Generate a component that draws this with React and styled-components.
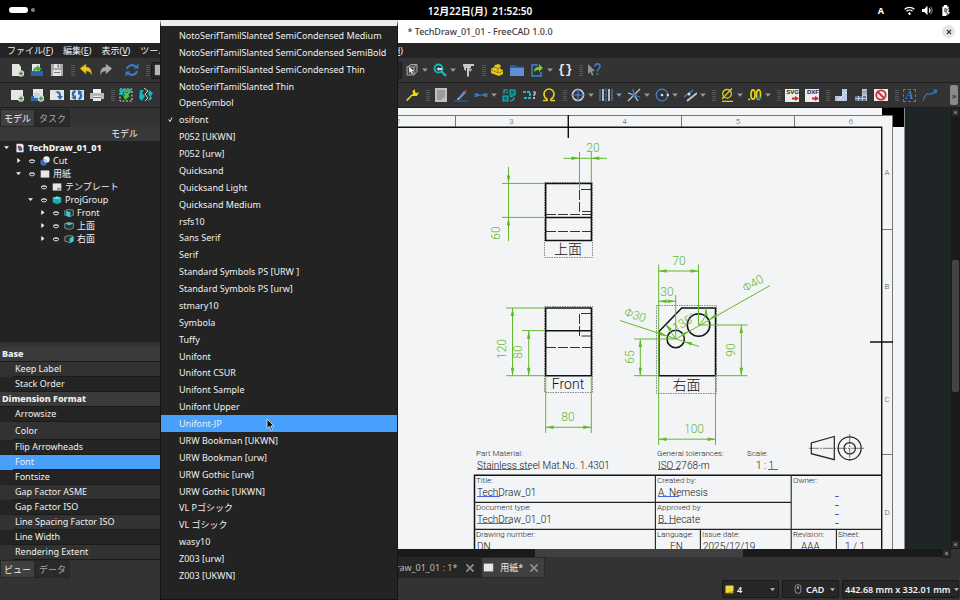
import React, { useState } from 'react';
import styled, { createGlobalStyle } from 'styled-components';

const fontNames = [
    'NotoSerifTamilSlanted SemiCondensed Medium',
    'NotoSerifTamilSlanted SemiCondensed SemiBold',
    'NotoSerifTamilSlanted SemiCondensed Thin',
    'NotoSerifTamilSlanted Thin',
    'OpenSymbol',
    'osifont',
    'P052 [UKWN]',
    'P052 [urw]',
    'Quicksand',
    'Quicksand Light',
    'Quicksand Medium',
    'rsfs10',
    'Sans Serif',
    'Serif',
    'Standard Symbols PS [URW ]',
    'Standard Symbols PS [urw]',
    'stmary10',
    'Symbola',
    'Tuffy',
    'Unifont',
    'Unifont CSUR',
    'Unifont Sample',
    'Unifont Upper',
    'Unifont-JP',
    'URW Bookman [UKWN]',
    'URW Bookman [urw]',
    'URW Gothic [urw]',
    'URW Gothic [UKWN]',
    'VL Pゴシック',
    'VL ゴシック',
    'wasy10',
    'Z003 [urw]',
    'Z003 [UKWN]',
];

const tree = [
    { depth: 0, arrow: 'open', icon: 'doc', label: 'TechDraw_01_01', bold: true },
    { depth: 1, arrow: 'closed', eye: true, icon: 'cut', label: 'Cut' },
    { depth: 1, arrow: 'open', eye: true, icon: 'sheet', label: '用紙' },
    { depth: 2, eye: true, icon: 'template', label: 'テンプレート' },
    { depth: 2, arrow: 'open', eye: true, icon: 'group', label: 'ProjGroup' },
    { depth: 3, arrow: 'closed', eye: true, icon: 'viewFront', label: 'Front' },
    { depth: 3, arrow: 'closed', eye: true, icon: 'viewTop', label: '上面' },
    { depth: 3, arrow: 'closed', eye: true, icon: 'viewRight', label: '右面' },
];

const properties = [
    { group: 'Base', rows: ['Keep Label', 'Stack Order'] },
    {
        group: 'Dimension Format',
        rows: ['Arrowsize', 'Color', 'Flip Arrowheads', 'Font', 'Fontsize', 'Gap Factor ASME',
            'Gap Factor ISO', 'Line Spacing Factor ISO', 'Line Width', 'Rendering Extent'],
        darkFirst: true,
    },
];

/* icons, all on a 14x14 grid */
const plus = <g><circle cx="11" cy="10.5" r="3.2" fill="#ddd" /><path d="M11 8.4v4.2M8.9 10.5h4.2" stroke="#3f9a3a" strokeWidth="1.4" /></g>;
const cube = <path d="M2 4l4-2.5h6v7L9 12H2z" fill="#444" stroke="#aaa" />;

const icons = {
    newDoc: <g><path d="M2 1h7l2 3v9H2z" fill="#e4e4e0" />{plus}</g>,
    open: <g><path d="M2 1h8v9H2z" fill="#e8e8e8" /><path d="M1 8h12v5H1z" fill="#2f62a8" /><path d="M3 9c0-4 2-5 4-5V2l5 4-5 3V7C5 7 4 8 3 9z" fill="#47b02f" /></g>,
    save: <g><path d="M1 1h12v12H1z" fill="#a9a9a6" /><path d="M4 1h6v4H4zM3 7h8v6H3z" fill="#e2e2e2" /><path d="M7.500 1.500h1.500v3H7.500zM4 9h6v1H4z" fill="#777" /></g>,
    undo: <path d="M1 5.500L7 1v3c4 0 6 3 5.500 8C11.500 9 10 8 7 8v3z" fill="#f0c518" stroke="#a98a10" strokeWidth=".5" />,
    redo: <path d="M13 5.500L7 1v3C3 4 1 7 1.500 12 2.500 9 4 8 7 8v3z" fill="#aaa" stroke="#777" strokeWidth=".5" />,
    refresh: <g fill="none" stroke="#3a7cc9" strokeWidth="2"><path d="M2 6a5 4.500 0 0 1 8.500-2.500M12 8a5 4.500 0 0 1-8.500 2.500" /><path d="M8.500 5.500h5v-5zM5.500 8.500h-5v5z" fill="#3a7cc9" stroke="none" /></g>,
    viewCube: <g>{cube}<path d="M2 4h7v8M9 4l3-2.500" fill="none" stroke="#aaa" /><path d="M4 4l5 4-2.200.3L8 10.500l-1.200.6-1.200-2.300L4.300 10z" fill="#f2f2f2" /></g>,
    zoomFit: <g fill="none"><circle cx="5.500" cy="5.500" r="4" stroke="#18b7bd" strokeWidth="1.800" /><path d="M8.500 8.500L13 13" stroke="#18b7bd" strokeWidth="2.400" /><path d="M3.500 6L6 4v1h3v2H6v1z" fill="#ddd" /></g>,
    caliper: <g><path d="M2 1h11v2h-3v2H8v8.500H6V5H5v3L3 6.500V4L2 3z" fill="#c9cac5" /><path d="M8 5l3 1-1 2.500L8 8z" fill="#a9aaa5" /></g>,
    part: <g><path d="M1 6l3-2 1-2 4-1 2 2-1 3 3 1v4l-4 2-8-3z" fill="#e9c91c" /><path d="M1 7l8 3 4-2M4 4l4 1.500 3-2M8 5.500V9" stroke="#7f6b05" strokeWidth=".8" fill="none" /></g>,
    folder: <g><path d="M0 2h5l1 1.500h8V13H0z" fill="#2d5ba0" /><path d="M0 5h14v8H0z" fill="#5f90d6" /></g>,
    exportLink: <g><path d="M8 2H2v11h9V9" fill="none" stroke="#3d88d4" strokeWidth="1.400" /><path d="M4 9c0-4 2-5 5-5V1l4 4-4 4V7C7 7 5 7.500 4 9z" fill="#7cc92b" /></g>,
    help: <g><path d="M1 1l7 7-3 .2L6.500 12l-1.500.7L3.500 9 1 11z" fill="#8f8f8f" /><path d="M8 3.500C8 0 13 0 13 3.500c0 2.500-2.500 2-2.500 5" fill="none" stroke="#3d7cc4" strokeWidth="1.600" /><circle cx="10.500" cy="11" r="1" fill="#3d7cc4" /></g>,
    page: <g><path d="M1 2h12v10H1z" fill="#e6e6e3" />{plus}</g>,
    pageTemplate: <g><path d="M3 1h10v8H3z" fill="#e6e6e3" /><path d="M1 8h11v5H1z" fill="#3568ad" /><path d="M4 5h6v5H4z" fill="#bcd0ea" />{plus}</g>,
    redraw: <g><path d="M0 2h14v10H0z" fill="#e6e6e3" /><path d="M5 4c4-2 6 0 6 4h2l-3 4-3-4h2c0-2-1-3-4-4z" fill="#2f69b5" /></g>,
    update: <g><path d="M0 2h14v10H0z" fill="#e6e6e3" /><path d="M5 2C1 3 1 7 3 9L1 10l5 2V7L4.500 8C4 6 4 5 6 4zM9 12c4-1 4-5 2-7l2-1-5-2v5l1.500-1c.5 2 .5 3-1.500 4z" fill="#2f69b5" /></g>,
    print: <g><path d="M3 1h8v4H3z" fill="#f1f1f1" /><path d="M0 5h14v6H0z" fill="#b9b9b7" /><path d="M3 8h8v5H3z" fill="#e9e9e9" /><path d="M3 9.500h8" stroke="#777" /></g>,
    activeView: <g><path d="M1 1h12v12H1z" fill="none" stroke="#ddd" strokeDasharray="2 1.500" /><path d="M1 1h11v3H4v3H1z" fill="#15b3b3" /><path d="M4 6c1-2 3-2 4-1l3-3 1 2-3 3 2 1-5 4-2-5 2 .5C6 6 5 6 4 6z" fill="#3fcf3a" /></g>,
    section: <g><path d="M1 2h4L3 5l3 3-3 5-3-3zM10 2l4 3-2 3 1 3-4 2 2-4-2-3z" fill="#14b5bb" /><path d="M5 0l4 3-3 3 3 4-3 3" stroke="#ccc" fill="none" /></g>,
    partial: <path d="M2 3l5-2 5 3-4 8-6-3z" fill="#14b5bb" />,
    wrench: <path d="M1 12l5-5 2-1-.5-3L10 1v3l1.500 1L14 4l-2 4H8.500L7 8l-4.500 5z" fill="#f0d50f" />,
    textPage: <g><path d="M1 0h12v14H1z" fill="#bfc3c5" /><path d="M3 3h8M3 5h8M3 7h8M3 9h8M3 11h5" stroke="#6b7072" strokeWidth=".9" /></g>,
    pencil: <g><path d="M0 13h14" stroke="#2c62ac" strokeWidth="1.200" /><path d="M4 10l6-7 2 1.700L6 11z" fill="#5b93dc" /><path d="M10 3l1.200-1.500 2 1.700L12 4.700z" fill="#e32727" /><path d="M3 12l1-2 2 1z" fill="#eee" /></g>,
    dimension: <g stroke="#3f7fce" fill="#3f7fce"><path d="M1 5v4M13 5v4M4 7h6" /><path d="M6 7L2 4.800v4.400zM8 7l4-2.200v4.400z" stroke="none" /></g>,
    balloon: <g fill="#0c6b6e" stroke="#19b9bd" strokeWidth="1.100"><path d="M1 8h5v5H1zM8 2h5v5H8z" /><path d="M2 6V2h4M12 9c0 3-1 4-4 4M8 9l3-1M4 4l2 1" fill="none" /></g>,
    detail: <g fill="none"><path d="M1 4h7v6H1" stroke="#19b9bd" strokeWidth="2" strokeDasharray="3 1" /><path d="M11 4h2v2l-1 1v1" stroke="#ddd" strokeWidth="1.200" /><path d="M12 9v2" stroke="#ddd" strokeWidth="1.600" /></g>,
    omega: <path d="M1 12.500h4V11C3 10 2 8 2 6a5 5 0 0 1 10 0c0 2-1 4-3 5v1.500h4" fill="none" stroke="#e8d21a" strokeWidth="1.600" />,
    center: <g fill="none"><circle cx="7" cy="7" r="5.500" stroke="#cfcfcf" strokeWidth="1.600" /><circle cx="7" cy="7" r="1.800" fill="#3f82d2" /><path d="M7 0v5M7 9v5M0 7h5M9 7h5" stroke="#3f82d2" strokeWidth="1.200" /></g>,
    lines: <g><path d="M1 1v12M13 1v12" stroke="#3f7fce" strokeWidth="1.200" /><path d="M4 1v12M10 1v12" stroke="#bbb" strokeWidth="2" /><path d="M7 0v14" stroke="#4a87d0" strokeDasharray="4 1" /></g>,
    cosmetic: <g fill="none" stroke="#c7c7c7" strokeWidth="1.300"><path d="M13 1L7 7 1 13M1 5l6 2 4 6" /><path d="M6 1l1 6 6 2" stroke="#3f82d2" /><circle cx="7" cy="7" r="2" fill="#3f82d2" stroke="none" /></g>,
    circle: <g fill="none"><circle cx="7" cy="7" r="5.800" stroke="#3f82d2" strokeWidth="1.300" /><circle cx="7" cy="7" r="1.300" fill="#ddd" /><circle cx="12.800" cy="7" r="1.200" fill="#ddd" /></g>,
    parallel: <g fill="none"><path d="M4 13L14 5" stroke="#c7c7c7" strokeWidth="1.800" /><path d="M1 9l9-7" stroke="#3f82d2" strokeWidth="1.400" /><circle cx="6" cy="6" r="1.500" fill="#ddd" /></g>,
    diameter: <g fill="none" stroke="#e3cd1c" strokeWidth="1.300"><circle cx="7" cy="5.800" r="4.300" /><path d="M2 11L12 .5M2 13.400h11" /></g>,
    decimals: <g fill="none" stroke="#e8d21a" strokeWidth="1.700"><ellipse cx="5" cy="6.500" rx="2" ry="4.700" /><ellipse cx="10.500" cy="6.500" rx="2" ry="4.700" /><path d="M0 11.500h2" /><path d="M11 7v6M8.500 10h5" stroke="#2f6bbb" strokeWidth="1.300" /></g>,
    hatch: <g><path d="M8 1h5v12H1V8h7z" fill="#a9bcd8" /><path d="M8 4l5 5M8 1l5 5M8 7l5 5M5 8l5 5M2 8l5 5M13 1L8 6M13 4L4 13M13 8l-5 5M8 8l-5 5" stroke="#e8edf5" strokeWidth=".6" /></g>,
    geoHatch: <g><path d="M8 1h5v12H1V8h7z" fill="#c3cad6" /><path d="M10 2v5M12 2v5M8 4h5" stroke="#7c8ca8" strokeWidth=".7" /><path d="M1 9h12M1 12h12" stroke="#2d5ba8" strokeWidth="1.500" strokeDasharray="3 1" /></g>,
    noFrame: <g fill="none"><path d="M0 1h14v12H0z" fill="#ececec" /><circle cx="7" cy="7" r="4.700" stroke="#d42a34" strokeWidth="1.800" /><path d="M4 4l6 6" stroke="#d42a34" strokeWidth="1.800" /></g>,
    leader: <path d="M0 13c2-6 4-8 6-7s4-1 7-3M10.500 2L14 2.500l-1.500 3" fill="none" stroke="#3576c2" strokeWidth="1.300" />,
    bench: <path d="M1 1h12v12H1z" fill="#b5b5b5" />,
    doc: <g><path d="M2 1h8l2 2v10H2z" fill="#e6e9f0" /><path d="M4 4h4v4H4z" fill="#c62c3a" /><circle cx="7.500" cy="8.500" r="2.800" fill="#2f62b0" /></g>,
    cut: <g><circle cx="9" cy="5" r="4.500" fill="#f2f2f2" /><circle cx="5" cy="9" r="4.500" fill="#3a69c0" /><path d="M5 5a4.500 4.500 0 0 1 4 4.500A4.500 4.500 0 0 1 5 5z" fill="#dfe5f2" /></g>,
    sheet: <path d="M1 2h12v10H1z" fill="#e7e7e4" />,
    template: <g><path d="M1 2h12v10H1z" fill="#e7e7e4" /><path d="M7 8h5v3H7z" fill="#999" /></g>,
    group: <g><path d="M1 4l6-2 6 2v6l-6 3-6-3z" fill="#1bb5b8" /><path d="M1 4l6 2 6-2-6-2z" fill="#6fe6e6" /><path d="M7 6v7" stroke="#0d8b8e" /></g>,
    viewFront: <g><path d="M1 4l5-2 7 1v7l-5 2-7-2z" fill="#333" stroke="#9aa" /><path d="M3 4l6 2v7l-6-2z" fill="#2fd0d0" /></g>,
    viewTop: <g><path d="M1 4l5-2 7 1v7l-5 2-7-2z" fill="#333" stroke="#9aa" /><path d="M1 4l5-2 7 1-5 3z" fill="#2fd0d0" /></g>,
    viewRight: <g><path d="M1 4l5-2 7 1v7l-5 2-7-2z" fill="#333" stroke="#9aa" /><path d="M8 6l5-3v7l-5 3z" fill="#2fd0d0" /></g>,
    eye: <g><ellipse cx="7" cy="7.500" rx="4.500" ry="2.800" fill="none" stroke="#e8e8e8" strokeWidth="1.600" /><path d="M2 6h10" stroke="#ccc" strokeWidth="1.500" /></g>,
    down: <path d="M2 4.500h10L7 10z" fill="currentColor" />,
    right: <path d="M4.500 2v10L11 7z" fill="currentColor" />,
    check: <path d="M3 7l3 4 4-8" fill="none" stroke="#eee" strokeWidth="2" />,
    cross: <path d="M2 2l10 10M12 2L2 12" stroke="currentColor" strokeWidth="2.400" fill="none" />,
    wifi: <g fill="none" stroke="#fff" strokeWidth="1.700"><path d="M.8 5.500a9 9 0 0 1 12.400 0M3.200 8a5.500 5.500 0 0 1 7.600 0" /><path d="M7 9l2 2-2 2-2-2z" fill="#fff" stroke="none" /></g>,
    volume: <g><path d="M0 5h3l4-4v12L3 9H0z" fill="#fff" /><path d="M9 4.500c1.500 1.500 1.500 3.500 0 5" stroke="#fff" fill="none" strokeWidth="1.500" /><path d="M11 2.500c2.500 3 2.500 6 0 9" stroke="#777" fill="none" strokeWidth="1.500" /></g>,
    battery: <g><path d="M5 0h4v2h2v5L8 14H3V2h2z" fill="#fff" /><path d="M5 4h4v5H5z" fill="#888" /><path d="M10 5l-3 5h2.500L9 14l4.500-5H11l1-4z" fill="#fff" stroke="#000" strokeWidth=".6" /></g>,
    mouse: <g fill="none" stroke="#bbb"><rect x="3" y="1" width="8" height="12" rx="3.500" /><path d="M7 3v4" strokeWidth="2" /></g>,
    bell: <g><path d="M1 1h12v12H1z" fill="#c9ab08" /><path d="M1 1h12v8L1 12z" fill="#f2d83a" /></g>,
};

const Icon = ({ name, size = 14 }) => (
    <svg width={size} height={size} viewBox="0 0 14 14" aria-hidden="true">{icons[name]}</svg>
);

const Tool = ({ icon, text, menu, label }) => (
    <ToolButton type="button" $menu={menu} aria-label={label || icon}>
        {text ? text : <Icon name={icon} />}
        {menu && <Icon name="down" size={8} />}
    </ToolButton>
);

const FileBadge = ({ children }) => (
    <Badge>{children}<svg width="7" height="5" viewBox="0 0 7 5"><path d="M0 1.500h3V0l4 2.500L3 5V3.500H0z" fill="#d6222c" /></svg></Badge>
);

/* arrow head whose tip is at x,y and which points along angle (0 = right) */
const Head = ({ x, y, a = 0 }) => (
    <path d="M0 0L-8-1.700V1.700z" fill="#62b82a" transform={`translate(${x} ${y}) rotate(${a})`} />
);

const DimText = ({ x, y, a = 0, children }) => (
    <text x="0" y="0" transform={`translate(${x} ${y}) rotate(${a})`}>{children}</text>
);

function Sheet() {
    return (
        <SheetSvg viewBox="161 108 790 441" preserveAspectRatio="xMinYMin slice" role="img" aria-label="TechDraw page">
            <path d="M0 107h904.500v442H0z" fill="#f3f4f6" />
            <path d="M882 108h22v19h-22z" fill="#000" />
            <path d="M390 116h503v433H390z" fill="#f3f4f6" />

            {/* frame and grid reference marks */}
            <g fill="none" stroke="#777" strokeWidth="1">
                <path d="M390 115.500h502.500V549M455.500 116v11M681.500 116v11M794.500 116v11M881 229.500h12M881 454.500h12" />
            </g>
            <path d="M390 127.200h491.700V549" fill="none" stroke="#111" strokeWidth="1.400" />
            <path d="M568.300 115v23M870 342h23" stroke="#111" strokeWidth="1.400" />
            <g className="marks">
                <text x="398" y="124">2</text><text x="511.500" y="124">3</text><text x="624.500" y="124">4</text>
                <text x="738" y="124">5</text><text x="851" y="124">6</text>
                <text x="887" y="175">A</text><text x="887" y="289">B</text><text x="887" y="402">C</text><text x="887" y="515">D</text>
            </g>

            {/* selection frames of the views */}
            <g fill="none" stroke="#888" strokeWidth="1" strokeDasharray="1.500 1">
                <path d="M544.500 182.500h48v75h-48zM544.500 306.500h48v86h-48zM656.500 305.500h60v88h-60z" />
            </g>

            {/* hidden edges */}
            <g fill="none" stroke="#333" strokeWidth="1" strokeDasharray="10 2">
                <path d="M546 214.500h45M546 231.500h45M546 347.500h45" />
                <path d="M591 189.500h-11.500v22H591M591 313.500h-11.500v22.500H591" />
            </g>

            {/* visible edges */}
            <g fill="none" stroke="#111" strokeWidth="1.500">
                <path d="M545.700 183.400h45.700v57h-45.700zM545.700 217.400h45.700" />
                <path d="M545.700 308h45.700v67.800h-45.700zM545.700 330.700h45.700" />
                <path d="M659 331.500L681.700 308h33.800v67.800H659z" />
                <circle cx="675.700" cy="339" r="8.700" />
                <circle cx="698.600" cy="325" r="11.300" />
            </g>

            {/* dimensions */}
            <g fill="none" stroke="#62b82a" strokeWidth="1">
                <path d="M579.500 152v37M591.300 152v31M563.500 158.300H607" />
                <path d="M502 183.400h43M502 217.400h43M508.500 167v74" />
                <path d="M506 308h39M506 375.700h39M512.500 308v67.700M522 330.700h23M528.700 330.700v45" />
                <path d="M545.700 376v57M591.300 376v57M545.700 427.300h45.600" />
                <path d="M658.700 264.500V445M698.500 264.500V325M658.700 271h40M658.700 301.300h17M675.700 295v44" />
                <path d="M715.500 376v69M658.700 439.200h57" />
                <path d="M634 339h41M634 375.700h25M640.300 339v36.700" />
                <path d="M698 325h49.500M715 375.700h32.500M741.300 325v50.700" />
                <path d="M770 285.500L675.700 339M620 320.500l79 26" />
                <path d="M666 325l9.700 14M705.600 308c1 7-2 13-7 17" />
            </g>
            <Head x="579.500" y="158.300" /><Head x="591.300" y="158.300" a={180} />
            <Head x="508.500" y="183.400" a={90} /><Head x="508.500" y="217.400" a={-90} />
            <Head x="512.500" y="308" a={-90} /><Head x="512.500" y="375.700" a={90} />
            <Head x="528.700" y="330.700" a={-90} /><Head x="528.700" y="375.700" a={90} />
            <Head x="545.700" y="427.300" a={180} /><Head x="591.300" y="427.300" />
            <Head x="658.700" y="271" a={180} /><Head x="698.500" y="271" />
            <Head x="658.700" y="301.300" a={180} /><Head x="675.700" y="301.300" />
            <Head x="658.700" y="439.200" a={180} /><Head x="715.500" y="439.200" />
            <Head x="640.300" y="339" a={-90} /><Head x="640.300" y="375.700" a={90} />
            <Head x="741.300" y="325" a={-90} /><Head x="741.300" y="375.700" a={90} />
            <Head x="709" y="319.500" a={150} /><Head x="689" y="331" a={-30} />
            <Head x="667.500" y="336" a={18} /><Head x="684" y="341.500" a={198} />
            <Head x="706" y="308" a={-90} /><Head x="665.500" y="324" a={-130} />
            <g className="dims">
                <DimText x={593} y={152}>20</DimText>
                <DimText x={500} y={233} a={-90}>60</DimText>
                <DimText x={506} y={349} a={-90}>120</DimText>
                <DimText x={522} y={352} a={-90}>80</DimText>
                <DimText x={568} y={421}>80</DimText>
                <DimText x={679} y={265}>70</DimText>
                <DimText x={667} y={296}>30</DimText>
                <DimText x={694} y={433}>100</DimText>
                <DimText x={634} y={357} a={-90}>65</DimText>
                <DimText x={735} y={350} a={-90}>90</DimText>
                <DimText x={755} y={287} a={-30}>Φ40</DimText>
                <DimText x={634} y={319} a={18}>Φ30</DimText>
                <DimText x={686} y={326} a={-30}>135°</DimText>
            </g>
            <g className="labels">
                <text x="568" y="254">上面</text><text x="568" y="389">Front</text><text x="686.500" y="390">右面</text>
            </g>

            {/* projection symbol */}
            <g fill="none" stroke="#222" strokeWidth="1.200">
                <path d="M811.300 443v10.700l23 6v-23.200z" />
                <circle cx="849.700" cy="448.300" r="11.500" /><circle cx="849.700" cy="448.300" r="5.700" />
                <path d="M809 448.300h55M849.700 434v28" strokeWidth=".6" strokeDasharray="10 1 2 1" />
            </g>

            {/* title block */}
            <path d="M474.500 549v-73.700h407" fill="none" stroke="#111" strokeWidth="1.500" />
            <path d="M474 502.400h317M474 529.400h407M655.400 475v74M791.200 475v74M700.400 529v20M836.400 529v20" fill="none" stroke="#222" strokeWidth="1.100" />
            <g className="captions">
                <text x="476" y="456">Part Material:</text><text x="657" y="456">General tolerances:</text><text x="747" y="456">Scale:</text>
                <text x="476" y="483">Title:</text><text x="657" y="483">Created by:</text><text x="793" y="483">Owner:</text>
                <text x="476" y="510">Document type:</text><text x="657" y="510">Approved by:</text>
                <text x="476" y="537">Drawing number:</text><text x="657" y="537">Language:</text><text x="702" y="537">Issue date:</text>
                <text x="793" y="537">Revision:</text><text x="838" y="537">Sheet:</text>
            </g>
            <g className="values">
                <text x="477" y="469">Stainless steel Mat.No. 1.4301</text><text x="658" y="469">ISO 2768-m</text><text x="756" y="469">1 : 1</text>
                <text x="477" y="496">TechDraw_01</text><text x="658" y="496">A. Nemesis</text>
                <text x="477" y="523">TechDraw_01_01</text><text x="658" y="523">B. Hecate</text>
                <text x="477" y="550">DN</text><text x="670" y="550">EN</text><text x="703" y="550">2025/12/19</text>
                <text x="801" y="550">AAA</text><text x="845" y="550">1 / 1</text>
            </g>
            <path d="M477 469.500h53M658 469.500h22M768 469.500h10M477 496.500h23M658 496.500h21M477 523.500h34M658 523.500h18M835 496.500h4M835 505.500h4M835 514.500h4M835 523.500h4" stroke="#4a62dd" strokeWidth="1" />
        </SheetSvg>
    );
}

function App() {
    const [current, setCurrent] = useState('Unifont-JP');

    return (
        <Desktop>
            <GlobalStyle />
            <TopBar>
                <Workspaces><Pill /><Dot /></Workspaces>
                <Clock>12月22日(月)&nbsp; 21:52:50</Clock>
                <Tray>
                    <InputMode>A</InputMode>
                    <Icon name="wifi" size={11} />
                    <Icon name="volume" size={11} />
                    <Icon name="battery" size={11} />
                </Tray>
            </TopBar>
            <TitleBar>
                <span />
                <Title>* TechDraw_01_01 - FreeCAD 1.0.0</Title>
                <CloseButton type="button" aria-label="Close"><Icon name="cross" size={6} /></CloseButton>
            </TitleBar>
            <MenuBar>
                <MenuStart>
                    <MenuItem type="button">ファイル(<u>F</u>)</MenuItem>
                    <MenuItem type="button">編集(<u>E</u>)</MenuItem>
                    <MenuItem type="button">表示(<u>V</u>)</MenuItem>
                    <MenuItem type="button">ツール(<u>T</u>)</MenuItem>
                    <LastMenu type="button">ヘルプ(<u>H</u>)</LastMenu>
                </MenuStart>
            </MenuBar>

            <Toolbar>
                <ToolStart>
                    <Tool icon="newDoc" /><Tool icon="open" /><Tool icon="save" />
                    <Handle />
                    <Tool icon="undo" /><Tool icon="redo" />
                    <Gap />
                    <Tool icon="refresh" />
                    <Handle />
                    <Workbench type="button" aria-label="Workbench"><Icon name="bench" size={12} /></Workbench>
                </ToolStart>
                <Tool icon="viewCube" menu /><Tool icon="zoomFit" menu /><Tool icon="caliper" />
                <Handle />
                <Tool icon="part" /><Tool icon="folder" /><Tool icon="exportLink" menu />
                <Tool label="expressions" text={<Braces>{'{}'}</Braces>} />
                <Handle />
                <Tool icon="help" />
            </Toolbar>
            <Toolbar>
                <ToolStart>
                    <Tool icon="page" /><Tool icon="pageTemplate" /><Tool icon="redraw" /><Tool icon="update" /><Tool icon="print" />
                    <Handle />
                    <Tool icon="activeView" /><Tool icon="section" /><Tool icon="partial" />
                </ToolStart>
                <Tool icon="wrench" />
                <Handle />
                <Tool icon="textPage" /><Tool icon="pencil" /><Tool icon="dimension" menu /><Tool icon="balloon" /><Tool icon="detail" /><Tool icon="omega" />
                <Handle />
                <Tool icon="center" menu /><Tool icon="lines" menu /><Tool icon="cosmetic" menu /><Tool icon="circle" menu /><Tool icon="parallel" menu />
                <Handle />
                <Tool icon="diameter" menu /><Tool icon="decimals" menu />
                <Handle />
                <Tool label="export svg" text={<FileBadge>SVG</FileBadge>} />
                <Tool label="export dxf" text={<FileBadge>DXF</FileBadge>} />
                <Handle />
                <Tool icon="hatch" /><Tool icon="geoHatch" /><Tool icon="noFrame" />
                <Handle />
                <Tool label="annotation" text={<Letter>A</Letter>} />
                <Tool icon="leader" />
                <More type="button" aria-label="More">»</More>
            </Toolbar>

            <Main>
                <Dock>
                    <Tabs>
                        <Tab type="button" $active>モデル</Tab>
                        <Tab type="button">タスク</Tab>
                    </Tabs>
                    <TreeHeader>モデル</TreeHeader>
                    <Tree>
                        {tree.map(item => (
                            <TreeRow key={item.label} $depth={item.depth} $bold={item.bold}>
                                <Slot>{item.arrow && <Icon name={item.arrow === 'open' ? 'down' : 'right'} size={7} />}</Slot>
                                {item.eye && <Slot><Icon name="eye" size={8} /></Slot>}
                                <Slot><Icon name={item.icon} size={10} /></Slot>
                                <TreeLabel>{item.label}</TreeLabel>
                            </TreeRow>
                        ))}
                    </Tree>
                    <PropertyTable>
                        {properties.map(group => (
                            <tbody key={group.group}>
                                <tr><GroupCell colSpan={2}>{group.group}</GroupCell></tr>
                                {group.rows.map((row, i) => (
                                    <PropertyRow key={row} $light={(i % 2 === 0) !== !!group.darkFirst} $selected={row === 'Font'} $tall={row === 'Color'}>
                                        <IndentCell />
                                        <td>{row}</td>
                                    </PropertyRow>
                                ))}
                            </tbody>
                        ))}
                    </PropertyTable>
                    <Tabs $bottom>
                        <Tab type="button" $active>ビュー</Tab>
                        <Tab type="button">データ</Tab>
                    </Tabs>
                </Dock>
                <Workspace>
                    <Viewport>
                        <Canvas><Sheet /></Canvas>
                        <VBar><ScrollArrow /><VThumb /><ScrollArrow /></VBar>
                    </Viewport>
                    <HBar><HThumb /><ScrollArrow /><Corner /></HBar>
                    <MdiTabs>
                        <MdiTab>TechDraw_01_01 : 1*<Icon name="cross" size={10} /></MdiTab>
                        <MdiTab $active><Icon name="sheet" size={11} />用紙*<Icon name="cross" size={10} /></MdiTab>
                    </MdiTabs>
                </Workspace>
            </Main>

            <StatusBar>
                <StatusButton type="button" $width={57}><Icon name="bell" size={9} /><span>4</span><Icon name="down" size={7} /></StatusButton>
                <StatusButton type="button" $width={57} $center><Icon name="mouse" size={10} /><span>CAD</span><Icon name="down" size={7} /></StatusButton>
                <StatusButton type="button" $width={117}><span>442.68 mm x 332.01 mm</span><Icon name="down" size={7} /></StatusButton>
            </StatusBar>

            <FontMenu role="menu" aria-label="Font">
                {fontNames.map(name => (
                    <FontItem
                        key={name}
                        type="button"
                        role="menuitemradio"
                        aria-checked={name === 'osifont'}
                        $current={name === current}
                        onMouseEnter={() => setCurrent(name)}
                    >
                        <CheckSlot>{name === 'osifont' && <Icon name="check" size={7} />}</CheckSlot>
                        {name}
                    </FontItem>
                ))}
                <Pointer width="9" height="13" viewBox="0 0 9 13"><path d="M1 1v9.500l2.300-2 1.700 4 1.500-.7-1.700-3.800H8z" fill="#111" stroke="#eee" strokeWidth=".8" /></Pointer>
            </FontMenu>
        </Desktop>
    );
}

export default App

const GlobalStyle = createGlobalStyle`
* {
    box-sizing: border-box;
}
html, body, #root {
    height: 100%;
    margin: 0;
}
body {
    overflow: hidden;
    background: #333;
    color: #f0f0f0;
    font: 400 9px "Noto Sans", "Noto Sans CJK JP", sans-serif;
}
button {
    margin: 0;
    padding: 0;
    border: 0;
    background: none;
    color: inherit;
    font: inherit;
}
svg {
    flex: none;
    display: block;
}
`

const Desktop = styled.div`
    position: relative;
    display: flex;
    flex-direction: column;
    height: 100%;
`

const TopBar = styled.header`
    display: grid;
    grid-template-columns: 1fr auto 1fr;
    align-items: center;
    height: 20px;
    flex: none;
    padding: 0 9px;
    background: #000;
    color: #fff;
`

const Workspaces = styled.div`
    display: flex;
    align-items: center;
    gap: 3px;
`

const Pill = styled.span`
    width: 19px;
    height: 6px;
    border-radius: 3px;
    background: #fff;
`

const Dot = styled.span`
    width: 4px;
    height: 4px;
    border-radius: 2px;
    background: #808080;
`

const Clock = styled.time`
    font-size: 10px;
    font-weight: 600;
`

const Tray = styled.div`
    display: flex;
    justify-content: flex-end;
    align-items: center;
    gap: 7px;
`

const InputMode = styled.span`
    margin-right: 13px;
    font-weight: 700;
`

const TitleBar = styled.div`
    display: grid;
    grid-template-columns: 1fr auto 1fr;
    align-items: center;
    height: 23px;
    flex: none;
    padding: 0 5px;
    background: #fff;
    color: #3a3a3a;
`

const Title = styled.h1`
    margin: 0;
    font-size: 9px;
    font-weight: 500;
`

const CloseButton = styled.button`
    display: grid;
    place-items: center;
    justify-self: end;
    width: 13px;
    height: 13px;
    border-radius: 50%;
    background: #e4e4e4;
    color: #222;
`

const MenuBar = styled.nav`
    height: 15px;
    flex: none;
    background: #242424;
`

const MenuStart = styled.div`
    display: flex;
    align-items: center;
    gap: 10px;
    width: 403px;
    height: 100%;
    padding-left: 7px;
`

const MenuItem = styled.button`
    white-space: nowrap;
`

const LastMenu = styled(MenuItem)`
    margin-left: auto;
`

const Toolbar = styled.div`
    display: flex;
    align-items: center;
    height: 25px;
    flex: none;
    border-bottom: 1px solid #1f1f1f;
    background: #333;
`

const ToolStart = styled.div`
    display: flex;
    align-items: center;
    width: 402px;
    flex: none;
    padding-left: 7px;
`

const ToolButton = styled.button`
    display: flex;
    align-items: center;
    gap: 2px;
    width: ${props => props.$menu ? 28 : 20}px;
    height: 20px;
    flex: none;
    padding-left: 3px;

    svg + svg {
        color: #9a9a9a;
    }
`

const Handle = styled.span`
    width: 4px;
    height: 11px;
    flex: none;
    margin: 0 1px 0 4px;
    background: repeating-linear-gradient(#555 0 1px, #333 1px 2px);
`

const Gap = styled.span`
    width: 6px;
    flex: none;
`

const Workbench = styled.button`
    flex: 1;
    height: 17px;
    padding-left: 2px;
    border: 1px solid #1a1a1a;
    border-radius: 2px;
    background: #262626;
`

const Braces = styled.span`
    font: 700 12px "Liberation Mono", monospace;
`

const Letter = styled.span`
    width: 13px;
    border: 1px dashed #3a80d0;
    color: #3a80d0;
    font: italic 700 12px/11px "Liberation Serif", serif;
    text-align: center;
`

const Badge = styled.span`
    display: flex;
    flex-direction: column;
    align-items: flex-end;
    width: 14px;
    height: 13px;
    background: #ececec;
    color: #222;
    font: 700 6px/7px "Liberation Sans", sans-serif;
`

const More = styled.button`
    width: 8px;
    height: 20px;
    margin: 0 2px 0 auto;
    border-radius: 2px;
    background: #8a8a8a;
    color: #222;
`

const Main = styled.main`
    display: flex;
    flex: 1;
    min-height: 0;
`

const Dock = styled.aside`
    display: flex;
    flex-direction: column;
    width: 160px;
    flex: none;
`

const Tabs = styled.div`
    display: flex;
    flex: none;
    padding: ${props => props.$bottom ? 0 : '1px'} 0 0;
`

const Tab = styled.button`
    height: 18px;
    padding: 0 3px;
    border: 1px solid #272727;
    background: ${props => props.$active ? '#404040' : '#2a2a2a'};
    color: ${props => props.$active ? '#f0f0f0' : '#a8a8a8'};
`

const TreeHeader = styled.div`
    flex: none;
    height: 14px;
    padding-right: 22px;
    background: #383838;
    line-height: 14px;
    text-align: right;
`

const Tree = styled.ul`
    flex: 1;
    min-height: 0;
    margin: 0 0 5px;
    padding: 0;
    overflow: hidden;
    background: #232323;
    list-style: none;
`

const TreeRow = styled.li`
    display: flex;
    align-items: center;
    height: 13px;
    padding-left: ${props => props.$depth * 12}px;
    font-weight: ${props => props.$bold ? 800 : 400};
    white-space: nowrap;
`

const Slot = styled.span`
    display: grid;
    place-items: center;
    width: 13px;
`

const TreeLabel = styled.span`
    padding-left: 2px;
`

const PropertyTable = styled.table`
    flex: none;
    width: 100%;
    border-collapse: collapse;

    td {
        height: 15px;
        padding: 0 2px;
        border-bottom: 1px solid #1a1a1a;
        line-height: 14px;
        white-space: nowrap;
    }
`

const GroupCell = styled.td`
    background: #3a3a3a;
    font-weight: 800;
`

const PropertyRow = styled.tr`
    background: ${props => props.$selected ? '#46a0fc' : props.$light ? '#323232' : '#242424'};

    && td {
        height: ${props => props.$tall ? 18 : 15}px;
    }
`

const IndentCell = styled.td`
    && {
        width: 13px;
        border-bottom: 0;
    }
`

const Workspace = styled.section`
    display: flex;
    flex-direction: column;
    flex: 1;
    min-width: 0;
    padding-left: 1px;
`

const Viewport = styled.div`
    display: flex;
    flex: 1;
    min-height: 0;
`

const Canvas = styled.div`
    flex: 1;
    min-width: 0;
    overflow: hidden;
    background: #1f2427;
`

const SheetSvg = styled.svg`
    width: 100%;
    height: 100%;
    font-family: Roboto, "Noto Sans CJK JP", sans-serif;

    .marks {
        fill: #555;
        font-size: 8px;
        font-weight: 300;
        text-anchor: middle;
    }
    .dims {
        fill: #62b82a;
        font-size: 12px;
        font-weight: 300;
        text-anchor: middle;
    }
    .labels {
        fill: #111;
        font-size: 14px;
        font-weight: 300;
        text-anchor: middle;
    }
    .captions {
        fill: #222;
        font-size: 8px;
        font-weight: 300;
    }
    .values {
        fill: #111;
        font-size: 10px;
        font-weight: 300;
    }
`

const VBar = styled.div`
    display: flex;
    flex-direction: column;
    width: 9px;
    flex: none;
    background: #1a1a1a;
`

const VThumb = styled.span`
    height: 132px;
    margin: 143px 1px auto;
    border-radius: 2px;
    background: #444;
`

const ScrollArrow = styled.span`
    width: 9px;
    height: 9px;
    flex: none;
    border: 1px solid #1a1a1a;
    background: radial-gradient(circle, #777 1px, #2c2c2c 2px);
`

const HBar = styled.div`
    display: flex;
    justify-content: flex-end;
    height: 8px;
    flex: none;
    background: #1a1a1a;
`

const HThumb = styled.span`
    width: 208px;
    margin-right: 199px;
    background: #404040;
`

const Corner = styled.span`
    width: 9px;
    background: #333;
`

const MdiTabs = styled.div`
    display: flex;
    height: 21px;
    flex: none;
    padding-left: 203px;
`

const MdiTab = styled.div`
    display: flex;
    align-items: center;
    gap: ${props => props.$active ? 6 : 8}px;
    height: 21px;
    padding: 0 5px 0 ${props => props.$active ? 1 : 5}px;
    border: 1px solid #282828;
    background: ${props => props.$active ? '#404040' : '#262626'};
    color: ${props => props.$active ? '#f0f0f0' : '#bbb'};
    white-space: nowrap;

    svg:last-child {
        color: #8e8e8e;
    }
`

const StatusBar = styled.footer`
    display: flex;
    align-items: center;
    justify-content: flex-end;
    gap: 3px;
    height: 22px;
    flex: none;
    padding: 0 1px;
`

const StatusButton = styled.button`
    display: flex;
    align-items: center;
    gap: 3px;
    width: ${props => props.$width}px;
    height: 18px;
    padding: 0 2px;
    padding-left: ${props => props.$center ? 10 : 2}px;
    border: 1px solid #181818;
    border-radius: 2px;
    background: #272727;
    font-weight: 600;
    white-space: nowrap;

    svg:last-child {
        margin-left: auto;
        color: #bbb;
    }
`

const FontMenu = styled.div`
    position: absolute;
    top: 20px;
    bottom: 0;
    left: 160px;
    display: flex;
    flex-direction: column;
    width: 238px;
    padding: 1px 0 15px;
    border: 1px solid #141414;
    border-top: 6px solid #ececee;
    background: #232323;
`

const FontItem = styled.button`
    display: flex;
    align-items: center;
    flex: 1;
    min-height: 0;
    background: ${props => props.$current ? '#46a0fc' : 'none'};
    text-align: left;
    white-space: nowrap;
`

const CheckSlot = styled.span`
    display: grid;
    place-items: center;
    width: 18px;
`

const Pointer = styled.svg`
    position: absolute;
    top: 392px;
    left: 105px;
    pointer-events: none;
`
